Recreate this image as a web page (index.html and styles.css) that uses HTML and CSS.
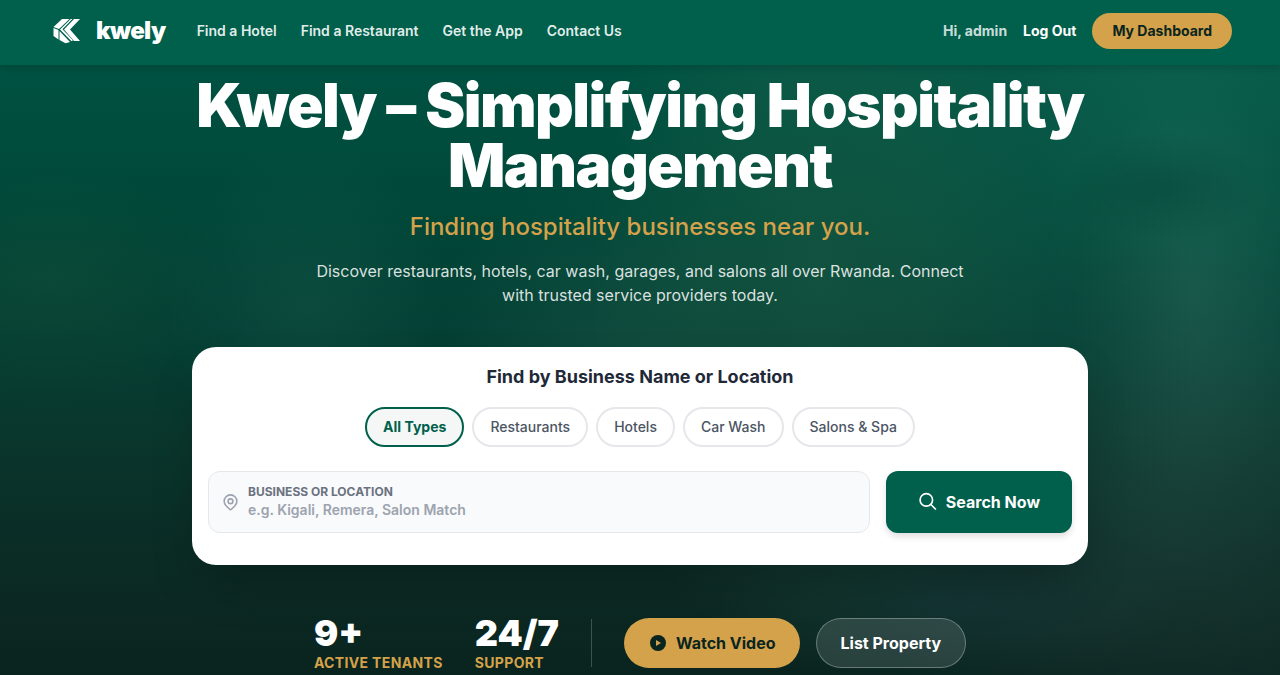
FILE: index.html
```html
<!DOCTYPE html>
<html lang="en">
<head>
  <meta charset="UTF-8" />
  <meta name="viewport" content="width=device-width, initial-scale=1.0" />
  <title>Kwely</title>
  <link rel="stylesheet" href="styles.css">
</head>
<body>
  <header class="navbar">
    <a href="#" class="brand">
      <svg class="brand-logo" viewBox="0 0 36 36" fill="#fff" aria-hidden="true">
        <path d="M14 6h7.500L11 16l-5.500-2z" />
        <path d="M22.800 6h1.600L14.500 16.200l10.500 11-1.500 1.100L12 16.500z" />
        <path d="M26 6h6L22 16.500 32 28h-6L16 16.500z" />
        <path d="M5.500 15l5 2v9.500l-5-3.500z" />
        <path d="M11.500 18l10.500 11-4.500 1.200-6-3.200z" />
      </svg>
      <span class="brand-name">kwely</span>
    </a>
    <nav class="nav-links">
      <a href="#">Find a Hotel</a>
      <a href="#">Find a Restaurant</a>
      <a href="#">Get the App</a>
      <a href="#">Contact Us</a>
    </nav>
    <div class="nav-user">
      <span class="greeting">Hi, admin</span>
      <a href="#" class="logout">Log Out</a>
      <a href="#" class="dashboard-btn">My Dashboard</a>
    </div>
  </header>

  <main class="hero">
    <div class="hero-content">
      <h1>Kwely – Simplifying Hospitality Management</h1>
      <p class="tagline">Finding hospitality businesses near you.</p>
      <p class="intro">Discover restaurants, hotels, car wash, garages, and salons all over Rwanda. Connect with trusted service providers today.</p>

      <form class="search-card">
        <h2>Find by Business Name or Location</h2>
        <div class="types">
          <button type="button" class="type active">All Types</button>
          <button type="button" class="type">Restaurants</button>
          <button type="button" class="type">Hotels</button>
          <button type="button" class="type">Car Wash</button>
          <button type="button" class="type">Salons &amp; Spa</button>
        </div>
        <div class="search-row">
          <div class="search-field">
            <svg class="pin" viewBox="0 0 24 24" fill="none" stroke="currentColor" stroke-width="2" stroke-linejoin="round" aria-hidden="true">
              <path d="M17.657 16.657L13.414 20.900a2 2 0 01-2.827 0l-4.244-4.243a8 8 0 1111.314 0z" />
              <circle cx="12" cy="11" r="3" />
            </svg>
            <div class="field-text">
              <label for="query">Business or Location</label>
              <input type="text" id="query" placeholder="e.g. Kigali, Remera, Salon Match" />
            </div>
          </div>
          <button type="submit" class="search-btn">
            <svg viewBox="0 0 24 24" fill="none" stroke="currentColor" stroke-width="2" aria-hidden="true">
              <circle cx="10" cy="9.500" r="7.500" />
              <path d="M15.500 15L21.500 21" />
            </svg>
            Search Now
          </button>
        </div>
      </form>

      <div class="stats">
        <div class="stat">
          <strong>9+</strong>
          <span>Active Tenants</span>
        </div>
        <div class="stat">
          <strong>24/7</strong>
          <span>Support</span>
        </div>
        <div class="divider"></div>
        <div class="actions">
          <button type="button" class="video-btn">
            <svg viewBox="0 0 20 20" aria-hidden="true">
              <circle cx="10" cy="10" r="8" fill="currentColor" />
              <path d="M8 7l5 3-5 3z" fill="#d4a24a" />
            </svg>
            Watch Video
          </button>
          <a href="#" class="list-btn">List Property</a>
        </div>
      </div>
    </div>
  </main>
</body>
</html>
```

FILE: styles.css
```css
* {
  box-sizing: border-box;
}
body {
  margin: 0;
  font-family: Inter, sans-serif;
  color: #fff;
  background-color: #0a2520;
}
a {
  color: inherit;
  text-decoration: none;
}
h1, h2, p {
  margin: 0;
}
button, input {
  font-family: inherit;
}
button {
  cursor: pointer;
}

/* Header */
.navbar {
  position: sticky;
  top: 0;
  z-index: 10;
  display: flex;
  align-items: center;
  padding: 13px 48px 16px;
  background-color: #00604c;
  box-shadow: 0 4px 6px rgba(0, 0, 0, 0.12);
}
.brand {
  display: flex;
  align-items: center;
  gap: 12px;
}
.brand-logo {
  width: 36px;
  height: 36px;
}
.brand-name {
  font-size: 24px;
  font-weight: 900;
  line-height: 32px;
  letter-spacing: -0.025em;
}
.nav-links {
  display: flex;
  gap: 24px;
  margin-left: 31px;
  font-size: 14px;
  font-weight: 600;
  line-height: 20px;
  color: rgba(255, 255, 255, 0.9);
}
.nav-user {
  display: flex;
  align-items: center;
  gap: 16px;
  margin-left: auto;
  font-size: 14px;
  font-weight: 700;
  line-height: 20px;
}
.greeting {
  color: rgba(255, 255, 255, 0.8);
}
.dashboard-btn {
  padding: 8px 20px;
  border-radius: 18px;
  background-color: #d4a24a;
  color: #0a2520;
}

/* Hero */
.hero {
  min-height: calc(100vh - 65px);
  padding: 10px 48px 2px;
  background-image:
    radial-gradient(ellipse 8% 9% at 91% 20%, rgba(0, 60, 50, 0.4), transparent),
    radial-gradient(ellipse 7% 30% at 87% 45%, rgba(0, 50, 40, 0.14), transparent),
    radial-gradient(ellipse 9% 34% at 93% 38%, rgba(80, 130, 120, 0.18), transparent),
    radial-gradient(ellipse 26% 70% at 92% 15%, rgba(50, 150, 120, 0.24), rgba(50, 130, 110, 0.14) 50%, transparent),
    radial-gradient(ellipse 24% 45% at 92% 78%, rgba(60, 90, 90, 0.24), transparent),
    radial-gradient(ellipse 18% 65% at 64% 35%, rgba(80, 140, 100, 0.2), rgba(80, 140, 100, 0.13) 50%, transparent),
    radial-gradient(ellipse 13% 32% at 47% 48%, rgba(70, 130, 110, 0.16), transparent),
    radial-gradient(ellipse 11% 28% at 24% 40%, rgba(60, 130, 110, 0.15), transparent),
    radial-gradient(ellipse 14% 20% at 4% 36%, rgba(70, 110, 60, 0.12), transparent),
    radial-gradient(ellipse 18% 14% at 74% 88%, rgba(40, 90, 110, 0.18), transparent),
    linear-gradient(#005242, #004839 22%, #043e33 46%, #0a372d 60%, #0a2e27 76%, #0c2822 90%, #09241f);
}
.hero-content {
  max-width: 896px;
  margin: 0 auto;
  text-align: center;
}
h1 {
  font-size: 60px;
  font-weight: 900;
  line-height: 60px;
  letter-spacing: -0.025em;
}
.tagline {
  margin-top: 16px;
  font-size: 24px;
  font-weight: 500;
  line-height: 32px;
  color: #d4a24a;
}
.intro {
  max-width: 672px;
  margin: 16px auto 40px;
  font-size: 16px;
  line-height: 24px;
  color: rgba(255, 255, 255, 0.85);
}

/* Search card */
.search-card {
  padding: 16px 16px 32px;
  border-radius: 24px;
  background-color: #fff;
  box-shadow: 0 25px 50px -12px rgba(0, 0, 0, 0.25);
}
.search-card h2 {
  font-size: 18px;
  font-weight: 700;
  line-height: 28px;
  color: #1f2937;
}
.types {
  display: flex;
  flex-wrap: wrap;
  justify-content: center;
  gap: 8px;
  margin: 16px 0 24px;
}
.type {
  padding: 8px 16px;
  border: 2px solid #e5e7eb;
  border-radius: 20px;
  background-color: #fff;
  color: #4b5563;
  font-size: 14px;
  font-weight: 500;
  line-height: 20px;
}
.type.active {
  border-color: #00604c;
  background-color: #f5f7f6;
  color: #00604c;
  font-weight: 700;
}
.search-row {
  display: flex;
  gap: 16px;
}
.search-field {
  flex: 1;
  display: flex;
  align-items: center;
  gap: 8px;
  padding: 12px;
  border: 1px solid #e5e7eb;
  border-radius: 12px;
  background-color: #f9fafb;
  text-align: left;
}
.pin {
  width: 19px;
  height: 20px;
  color: #9ca3af;
}
.field-text {
  flex: 1;
}
.field-text label {
  display: block;
  font-size: 12px;
  font-weight: 700;
  line-height: 16px;
  text-transform: uppercase;
  color: #6b7280;
}
.field-text input {
  display: block;
  width: 100%;
  height: 18px;
  margin-bottom: 2px;
  padding: 0;
  border: none;
  outline: none;
  background: transparent;
  color: #1f2937;
  font-size: 14px;
  font-weight: 600;
}
.field-text input::placeholder {
  color: #9ca3af;
}
.search-btn {
  display: flex;
  align-items: center;
  gap: 8px;
  padding: 0 32px;
  border: none;
  border-radius: 12px;
  background-color: #00604c;
  color: #fff;
  font-size: 16px;
  font-weight: 700;
  box-shadow: 0 4px 6px rgba(0, 0, 0, 0.12);
}
.search-btn svg, .video-btn svg {
  width: 20px;
  height: 20px;
}

/* Stats and actions */
.stats {
  display: flex;
  flex-wrap: wrap;
  align-items: center;
  justify-content: center;
  gap: 32px;
  margin-top: 48px;
}
.stat {
  text-align: left;
}
.stat strong, .stat span {
  display: block;
}
.stat strong {
  font-size: 36px;
  font-weight: 900;
  line-height: 40px;
}
.stat span {
  font-size: 14px;
  font-weight: 700;
  line-height: 20px;
  letter-spacing: 0.025em;
  text-transform: uppercase;
  color: #d4a24a;
}
.divider {
  width: 1px;
  height: 48px;
  background-color: rgba(255, 255, 255, 0.2);
}
.actions {
  display: flex;
  gap: 16px;
}
.video-btn, .list-btn {
  display: flex;
  align-items: center;
  gap: 8px;
  border-radius: 25px;
  font-size: 16px;
  font-weight: 700;
  line-height: 24px;
}
.video-btn {
  padding: 13px 24px;
  border: none;
  background-color: #d4a24a;
  color: #0a2520;
}
.list-btn {
  padding: 12px 24px;
  border: 1px solid rgba(255, 255, 255, 0.3);
  background-color: rgba(255, 255, 255, 0.12);
}
```
